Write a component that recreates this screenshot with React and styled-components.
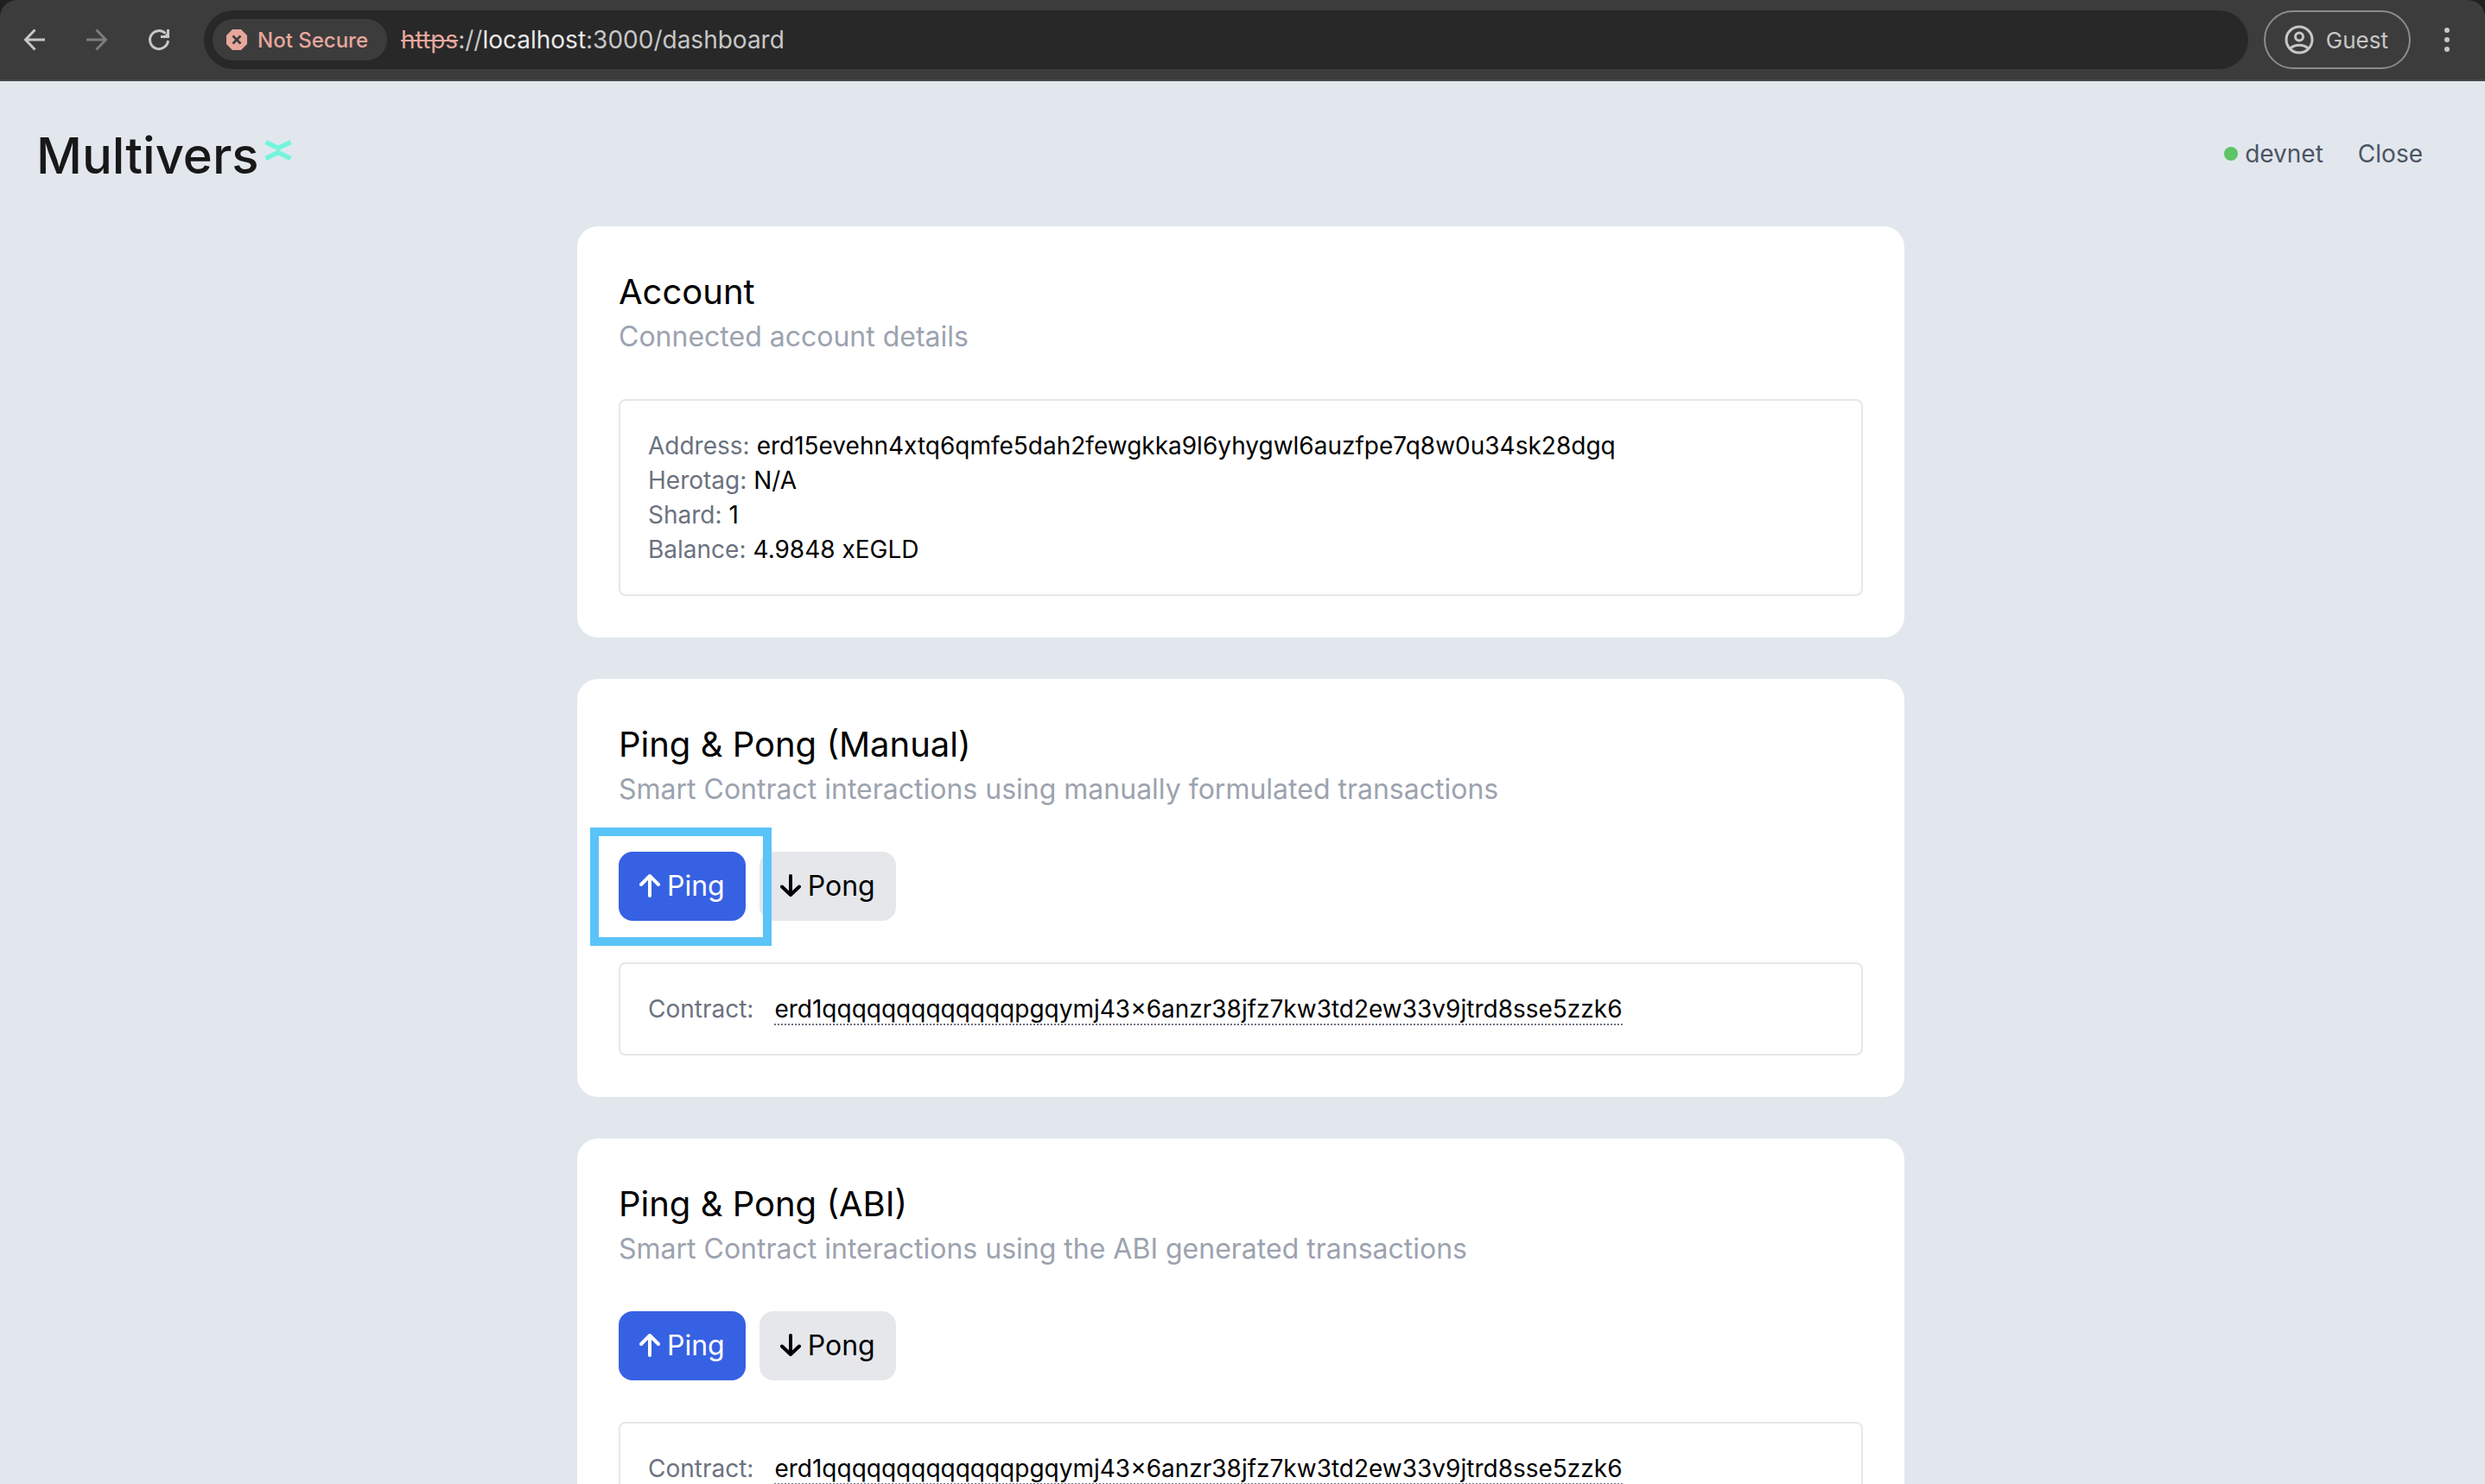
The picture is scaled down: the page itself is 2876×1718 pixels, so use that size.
import React from "react";
import styled, { createGlobalStyle, css } from "styled-components";

const Global = createGlobalStyle`
  * { box-sizing: border-box; }
  body {
    margin: 0;
    background: #e2e7ee;
    font-family: Inter, "Liberation Sans", sans-serif;
    color: #000;
    overflow: hidden;
  }
  #root { height: 100vh; }
  button { font-family: inherit; border: 0; cursor: pointer; padding: 0; background: none; }
  h2, p, dl, dd, dt { margin: 0; font-weight: 400; }
`;

const Window = styled.div`
  display: flex;
  flex-direction: column;
  height: 100vh;
  overflow: hidden;
`;

const Chrome = styled.div`
  flex: none;
  background: #1f2020;
`;

const Toolbar = styled.div`
  display: flex;
  align-items: center;
  height: 94px;
  padding: 0 20px 0 16px;
  background: #3c3c3c;
  border-bottom: 2px solid #484848;
  border-radius: 20px 20px 0 0;
`;

const NavButtons = styled.div`
  display: flex;
  gap: 24px;
  margin-right: 28px;
`;

const IconButton = styled.button`
  display: flex;
  align-items: center;
  justify-content: center;
  width: 48px;
  height: 48px;
  color: ${(p) => (p.$dim ? "#7d7d7d" : "#c7c7c7")};
`;

const AddressBar = styled.div`
  flex: 1;
  display: flex;
  align-items: center;
  height: 68px;
  padding: 0 10px;
  background: #282828;
  border-radius: 34px;
`;

const SecurityChip = styled.button`
  display: flex;
  align-items: center;
  gap: 12px;
  height: 48px;
  padding: 0 22px 0 16px;
  margin-right: 16px;
  border-radius: 24px;
  background: #3c3c3c;
  color: #e8a79d;
  font-size: 24px;
  font-weight: 500;
`;

const Url = styled.div`
  font-size: 28px;
  line-height: 40px;
  color: #c7c7c7;

  s { color: #e8a79d; }
  b { color: #e9e9e9; font-weight: 400; }
`;

const Guest = styled.button`
  display: flex;
  align-items: center;
  gap: 14px;
  height: 68px;
  margin: 0 18px;
  padding: 0 24px 0 22px;
  border: 2px solid #8c8c8c;
  border-radius: 34px;
  color: #c7c7c7;
  font-size: 26px;
`;

const Page = styled.div`
  flex: 1;
  min-height: 0;
  overflow: hidden;
  padding-right: 4px;
`;

const Header = styled.header`
  display: flex;
  align-items: center;
  justify-content: space-between;
  height: 168px;
  padding: 0 68px 0 42px;
`;

const Logo = styled.a`
  display: flex;
  align-items: flex-start;
  gap: 6px;
  padding-top: 4px;
  color: #181818;
  text-decoration: none;
`;

const HeaderNav = styled.nav`
  display: flex;
  align-items: center;
  gap: 40px;
  font-size: 28px;
  line-height: 40px;
  color: #4b5563;
`;

const Network = styled.div`
  display: flex;
  align-items: center;
  gap: 8px;

  &::before {
    content: "";
    width: 16px;
    height: 16px;
    border-radius: 50%;
    background: #5fc466;
  }
`;

const Close = styled.button`
  color: inherit;
  font-size: inherit;
  line-height: inherit;
`;

const Main = styled.main`
  display: flex;
  flex-direction: column;
  gap: 48px;
  max-width: 1536px;
  margin: 0 auto;
`;

const Card = styled.section`
  display: flex;
  flex-direction: column;
  gap: 48px;
  padding: 48px;
  background: #fff;
  border-radius: 24px;
`;

const Title = styled.h2`
  font-size: 40px;
  line-height: 56px;
`;

const Subtitle = styled.p`
  font-size: 32px;
  line-height: 48px;
  color: #9ca3af;
`;

const Actions = styled.div`
  display: flex;
  gap: 16px;
`;

const Action = styled.button`
  position: relative;
  display: flex;
  align-items: center;
  gap: 8px;
  padding: 16px 24px;
  border-radius: 16px;
  font-size: 32px;
  line-height: 48px;
  background: ${(p) => (p.$primary ? "#3761e3" : "#e5e7eb")};
  color: ${(p) => (p.$primary ? "#fff" : "#000")};

  ${(p) =>
    p.$highlighted &&
    css`
      z-index: 1;
      &::after {
        content: "";
        position: absolute;
        inset: -28px -30px -29px -33px;
        border: 10px solid #5ac3f8;
      }
    `}
`;

const Panel = styled.dl`
  padding: 32px;
  border: 2px solid #e5e7eb;
  border-radius: 8px;
  font-size: 28px;
  line-height: 40px;
`;

const Row = styled.div`
  display: flex;
  align-items: flex-start;
  gap: ${(p) => (p.$wide ? "24px" : "8px")};
  height: 40px;
`;

const Label = styled.dt`
  color: #6b7280;
`;

const Contract = styled.a`
  display: block;
  height: 39px;
  color: inherit;
  text-decoration: none;
  border-bottom: 2px dotted #6b7280;
`;

const BackIcon = () => (
  <svg width="32" height="32" viewBox="0 0 32 32" fill="none" stroke="currentColor" strokeWidth="3">
    <path d="M28 16H6M16.500 4.500L5.500 16l11 11.500" />
  </svg>
);

const ForwardIcon = () => (
  <svg width="32" height="32" viewBox="0 0 32 32" fill="none" stroke="currentColor" strokeWidth="3">
    <path d="M4 16h22M15.500 4.500l11 11.500-11 11.500" />
  </svg>
);

const ReloadIcon = () => (
  <svg width="32" height="32" viewBox="0 0 32 32" fill="none" stroke="currentColor" strokeWidth="3">
    <path d="M26.500 17A10.500 10.500 0 1 1 23.500 8.700" />
    <path d="M28 4v10H18v-3h4.500l2.500-2.500V4z" fill="currentColor" stroke="none" />
  </svg>
);

const DangerIcon = () => (
  <svg width="24" height="24" viewBox="0 0 24 24">
    <path d="M7 0h10l7 7v10l-7 7H7l-7-7V7z" fill="#e8a79d" />
    <path d="M7.500 7.500l9 9M16.500 7.500l-9 9" stroke="#3c3c3c" strokeWidth="2.600" />
  </svg>
);

const PersonIcon = () => (
  <svg width="34" height="34" viewBox="0 0 34 34" fill="none" stroke="currentColor" strokeWidth="3">
    <circle cx="17" cy="17" r="15" />
    <circle cx="17" cy="13.500" r="4.500" />
    <path d="M6.500 27c6-5 15-5 21 0" />
  </svg>
);

const MenuIcon = () => (
  <svg width="32" height="32" viewBox="0 0 32 32" fill="currentColor">
    <circle cx="16" cy="5" r="3" />
    <circle cx="16" cy="16" r="3" />
    <circle cx="16" cy="27" r="3" />
  </svg>
);

const Arrow = ({ down }) => (
  <svg
    width="24"
    height="32"
    viewBox="0 0 24 32"
    fill="none"
    stroke="currentColor"
    strokeWidth="4"
    strokeLinecap="round"
    strokeLinejoin="round"
  >
    {down ? <path d="M12 4v22M2 16.500L12 26l10-9.500" /> : <path d="M12 27V4M2 14l10-10 10 10" />}
  </svg>
);

const LogoText = styled.span`
  font-size: 58px;
  line-height: 60px;
  font-weight: 500;
`;

const LogoMark = styled.svg`
  margin-top: 12px;
`;

const address = "erd1qqqqqqqqqqqqqpgqymj43x6anzr38jfz7kw3td2ew33v9jtrd8sse5zzk6";

const account = [
  ["Address:", "erd15evehn4xtq6qmfe5dah2fewgkka9l6yhygwl6auzfpe7q8w0u34sk28dgq"],
  ["Herotag:", "N/A"],
  ["Shard:", "1"],
  ["Balance:", "4.9848 xEGLD"],
];

function Heading({ title, subtitle }) {
  return (
    <div>
      <Title>{title}</Title>
      <Subtitle>{subtitle}</Subtitle>
    </div>
  );
}

function PingPong({ title, subtitle, highlighted }) {
  return (
    <Card>
      <Heading title={title} subtitle={subtitle} />
      <Actions>
        <Action $primary $highlighted={highlighted}>
          <Arrow />
          Ping
        </Action>
        <Action>
          <Arrow down />
          Pong
        </Action>
      </Actions>
      <Panel>
        <Row $wide>
          <Label>Contract:</Label>
          <dd>
            <Contract href="#contract">{address}</Contract>
          </dd>
        </Row>
      </Panel>
    </Card>
  );
}

export default function App() {
  return (
    <Window>
      <Global />
      <Chrome>
        <Toolbar>
          <NavButtons>
            <IconButton aria-label="Back"><BackIcon /></IconButton>
            <IconButton $dim aria-label="Forward"><ForwardIcon /></IconButton>
            <IconButton aria-label="Reload"><ReloadIcon /></IconButton>
          </NavButtons>
          <AddressBar>
            <SecurityChip>
              <DangerIcon />
              Not Secure
            </SecurityChip>
            <Url><s>https</s>://<b>localhost</b>:3000/dashboard</Url>
          </AddressBar>
          <Guest>
            <PersonIcon />
            Guest
          </Guest>
          <IconButton aria-label="Menu"><MenuIcon /></IconButton>
        </Toolbar>
      </Chrome>
      <Page>
        <Header>
          <Logo href="#home" aria-label="MultiversX">
            <LogoText>Multivers</LogoText>
            <LogoMark width="32" height="24" viewBox="0 0 32 24" fill="none" stroke="#74f5dd" strokeWidth="5.500">
              <path d="M1.500 2.500L16 9.500l14.500-7M1.500 21.500L16 14.500l14.500 7" />
            </LogoMark>
          </Logo>
          <HeaderNav>
            <Network>devnet</Network>
            <Close>Close</Close>
          </HeaderNav>
        </Header>
        <Main>
          <Card>
            <Heading title="Account" subtitle="Connected account details" />
            <Panel>
              {account.map(([label, value]) => (
                <Row key={label}>
                  <Label>{label}</Label>
                  <dd>{value}</dd>
                </Row>
              ))}
            </Panel>
          </Card>
          <PingPong
            title="Ping & Pong (Manual)"
            subtitle="Smart Contract interactions using manually formulated transactions"
            highlighted
          />
          <PingPong
            title="Ping & Pong (ABI)"
            subtitle="Smart Contract interactions using the ABI generated transactions"
          />
        </Main>
      </Page>
    </Window>
  );
}
